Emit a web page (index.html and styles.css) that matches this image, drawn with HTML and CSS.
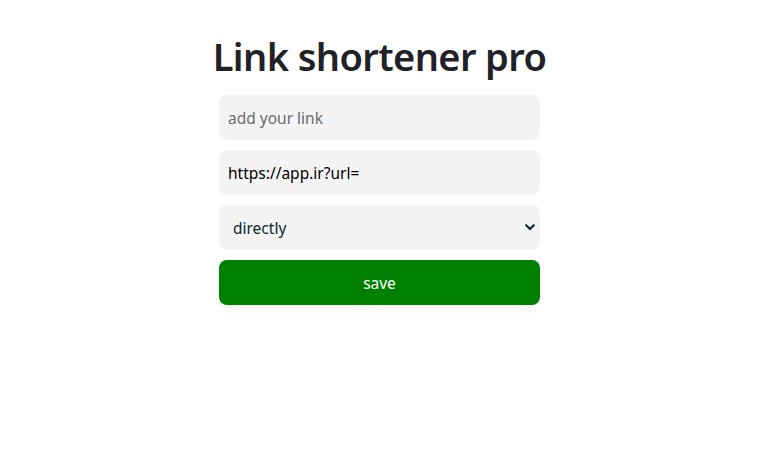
FILE: index.html
```html
<!DOCTYPE html>
<html lang="en">
<head>
<meta charset="utf-8">
<title>Link shortener pro</title>
<link rel="stylesheet" href="styles.css">
</head>
<body>
<div class="page">
  <main class="card">
    <h1 class="title">Link shortener pro</h1>
    <form class="form">
      <input class="field" type="text" placeholder="add your link">
      <input class="field" type="text" value="https://app.ir?url=">
      <div class="select-wrap">
        <select class="field select">
          <option>directly</option>
        </select>
        <svg class="chev" width="10" height="7" viewBox="0 0 10 7"><path d="M1.2 1.2 L5 5 L8.8 1.2" fill="none" stroke="#0c2a2f" stroke-width="2.2" stroke-linecap="round" stroke-linejoin="round"/></svg>
      </div>
      <button class="save" type="button">save</button>
    </form>
  </main>
</div>
</body>
</html>
```
FILE: styles.css
```css
* { box-sizing: border-box; }
html, body { margin: 0; padding: 0; background: #fff; }
body { font-family: "Noto Sans", "Open Sans", sans-serif; color: #212529; }
.page { width: 759px; display: flex; justify-content: center; padding-top: 27px; }
.card { display: flex; flex-direction: column; align-items: center; }
.title { margin: 0 0 10px; font-size: 38px; font-weight: 600; line-height: 58px; color: #1f2328; letter-spacing: -0.6px; }
.form { width: 321px; display: flex; flex-direction: column; gap: 10px; }
.field { width: 100%; height: 45px; border: none; border-radius: 8px; background: #f4f4f4; font-family: inherit; font-size: 15.5px; color: #000; padding: 0 9px; outline: none; }
.field::placeholder { color: #6c6c6c; }
.select-wrap { position: relative; }
.select { appearance: none; -webkit-appearance: none; padding: 0 14px; color: #0c2a2f; }
.chev { position: absolute; right: 5px; top: 19px; pointer-events: none; }
.save { height: 45px; border: none; border-radius: 8px; background: #008000; color: #fff; font-family: inherit; font-size: 15.5px; }
```
